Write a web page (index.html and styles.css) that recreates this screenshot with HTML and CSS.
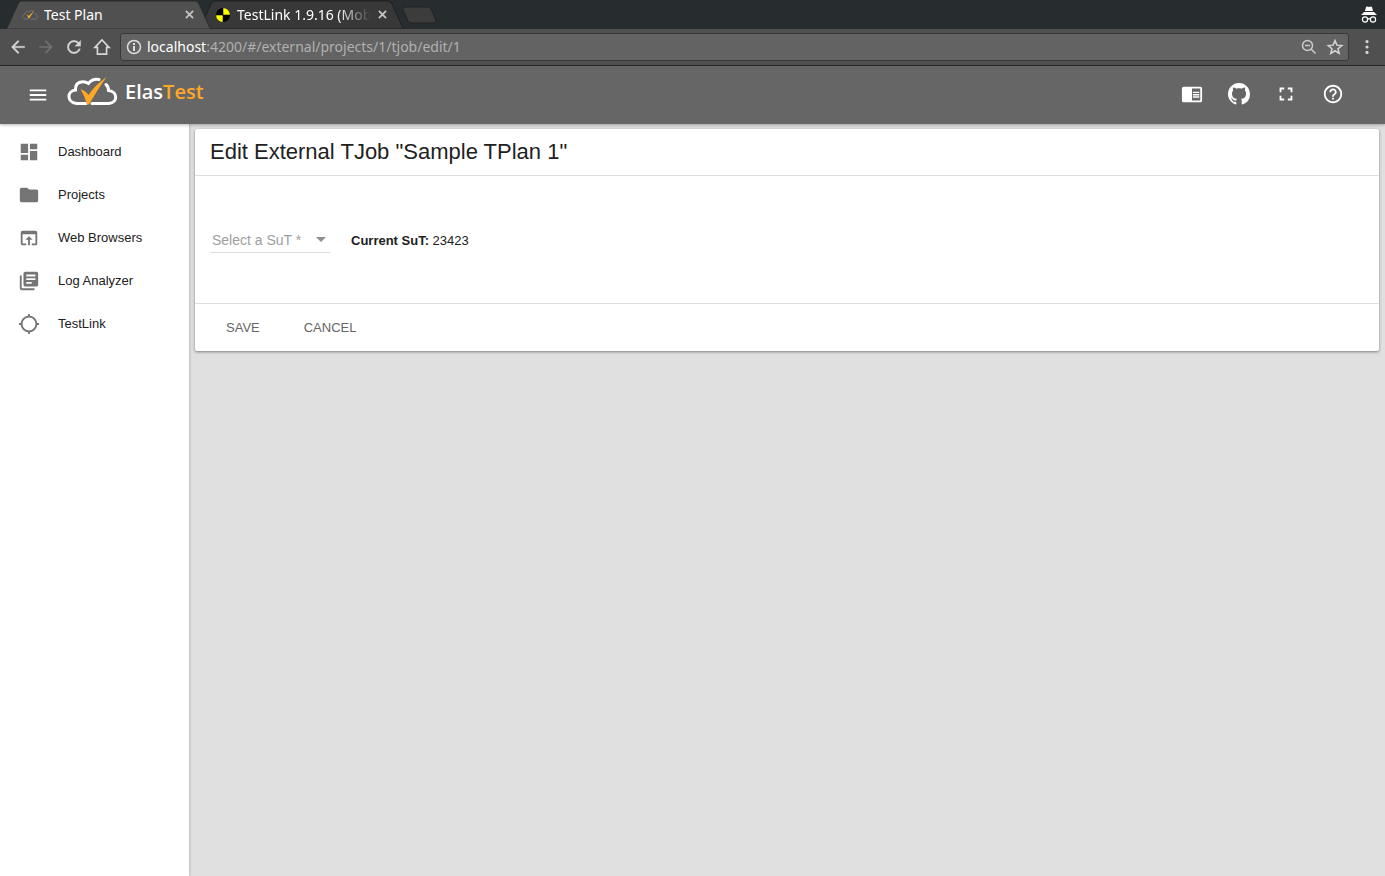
FILE: index.html
```html
<!DOCTYPE html>
<html lang="en">
<head>
<meta charset="utf-8">
<title>Test Plan</title>
<link rel="stylesheet" href="styles.css">
</head>
<body>
<div class="browser">
  <div class="tabstrip">
    <div class="tab tab-active">
      <svg class="tab-shape" viewBox="0 0 205 29" preserveAspectRatio="none" aria-hidden="true"><path d="M0 29Q1 28 2 26L12 4Q13 1 16 1H189Q192 1 193 4L203 26Q204 28 205 29Z" fill="#505050" stroke="#2c2c2c"/></svg>
      <svg class="favicon" viewBox="0 0 52 30" aria-hidden="true"><path d="M20 28H10C0 27-1 15 9 13C9 4 19 2 23 6C27 0 35 0 38 3M42 9L44 13C54 15 52 28 43 28H28" fill="none" stroke="#777" stroke-width="3"/><path d="M15 12L22 18L40 0L22 28Z" fill="#ffa726"/></svg>
      <span class="tab-title">Test Plan</span>
      <button class="tab-close" aria-label="Close Test Plan"><svg viewBox="0 0 10 10"><path d="M1 1L9 9M9 1L1 9"/></svg></button>
    </div>
    <div class="tab">
      <svg class="tab-shape" viewBox="0 0 205 29" preserveAspectRatio="none" aria-hidden="true"><path d="M0 29Q1 28 2 26L12 4Q13 1 16 1H189Q192 1 193 4L203 26Q204 28 205 29Z" fill="#383838" stroke="#1d1f20"/></svg>
      <svg class="favicon" viewBox="0 0 16 16" aria-hidden="true"><circle cx="8" cy="8" r="7" fill="#000"/><path d="M8 8V1A7 7 0 0 1 15 8ZM8 8V15A7 7 0 0 1 1 8Z" fill="#ff0"/><path d="M1 8H15M8 1V15" stroke="#000" stroke-width=".6"/></svg>
      <span class="tab-title tab-title-fade">TestLink 1.9.16 (Mob</span>
      <button class="tab-close" aria-label="Close TestLink"><svg viewBox="0 0 10 10"><path d="M1 1L9 9M9 1L1 9"/></svg></button>
    </div>
    <button class="new-tab" aria-label="New tab"><svg viewBox="0 0 36 18"><path d="M4 1H27Q29 1 30 3L35 14Q35 17 33 17H11Q8 17 7 15L2 4Q1 1 4 1Z" fill="#3c3c3c" stroke="#202223"/></svg></button>
    <svg class="incognito" viewBox="0 0 18 18" aria-hidden="true"><path d="M5 5L6 1Q7 0 9 1Q11 0 12 1L13 5ZM4 6H14L17 9H1Z" fill="#fff"/><g fill="none" stroke="#fff" stroke-width="1.2"><circle cx="5" cy="13.500" r="2.600"/><circle cx="13" cy="13.500" r="2.600"/><path d="M7.600 13.200Q9 12.200 10.400 13.200"/></g></svg>
  </div>
  <div class="toolbar">
    <button class="tool" aria-label="Back"><svg viewBox="0 0 24 24"><path d="M20 11H7.800l5.600-5.600L12 4l-8 8 8 8 1.400-1.400L7.800 13H20z" stroke="#d6d6d6" stroke-width=".3"/></svg></button>
    <button class="tool tool-off" aria-label="Forward" disabled><svg viewBox="0 0 24 24"><path d="M12 4l-1.400 1.400 5.600 5.600H4v2h12.200l-5.600 5.600L12 20l8-8z"/></svg></button>
    <button class="tool" aria-label="Reload"><svg viewBox="0 0 24 24"><path d="M17.650 6.350C16.200 4.900 14.210 4 12 4c-4.420 0-7.990 3.580-7.990 8s3.570 8 7.990 8c3.730 0 6.840-2.550 7.730-6h-2.080c-.82 2.330-3.040 4-5.650 4-3.310 0-6-2.690-6-6s2.690-6 6-6c1.660 0 3.140.69 4.220 1.780L13 11h7V4z" stroke="#d6d6d6" stroke-width=".3"/></svg></button>
    <button class="tool" aria-label="Home"><svg viewBox="0 0 24 24"><path d="M12 3.500L3.500 12.500H6.500V20.500H17.500V12.500H20.500Z" fill="none" stroke="#d6d6d6" stroke-width="2"/></svg></button>
    <div class="omnibox">
      <svg class="info" viewBox="0 0 16 16" aria-hidden="true"><circle cx="8" cy="8" r="6.500" fill="none" stroke="#ddd" stroke-width="1.500"/><path d="M7 7H9V12H7ZM7 4H9V6H7Z" fill="#ddd"/></svg>
      <span class="url"><span class="host">localhost</span>:4200/#/external/projects/1/tjob/edit/1</span>
      <svg class="box-icon" viewBox="0 0 18 18" aria-hidden="true"><g fill="none" stroke="#ccc" stroke-width="1.500"><circle cx="7.500" cy="7.500" r="5"/><path d="M5 7.500H10M11 11L15.500 15.500"/></g></svg>
      <svg class="box-icon" viewBox="0 0 24 24" aria-hidden="true"><path d="M12 3.500l2.500 6 6.500.5-5 4.200 1.600 6.300L12 17l-5.600 3.500L8 14.200 3 10l6.500-.5z" fill="none" stroke="#d6d6d6" stroke-width="2"/></svg>
    </div>
    <button class="tool" aria-label="Browser menu"><svg viewBox="0 0 24 24"><circle cx="12" cy="5.500" r="1.900"/><circle cx="12" cy="12" r="1.900"/><circle cx="12" cy="18.500" r="1.900"/></svg></button>
  </div>
</div>

<header class="app-header">
  <button class="icon-btn menu-btn" aria-label="Toggle menu"><svg viewBox="0 0 24 24"><path d="M3 18h18v-2H3v2zm0-5h18v-2H3v2zm0-7v2h18V6H3z"/></svg></button>
  <a class="brand" href="#" aria-label="ElasTest">
    <svg class="brand-logo" viewBox="0 0 52 30" aria-hidden="true"><path d="M20 26.500H11C.5 25.500.5 14 9.500 13C9 4.500 17.500 3 22.500 6.500C25 3 29 1.800 33 2.500M40 7.500Q42.500 9.500 42.500 13.500C52 14.500 52 25.500 43 26.500H26" fill="none" stroke="#fff" stroke-width="3" stroke-linecap="round"/><path d="M14.500 12Q20 14 22.500 18Q29 8 40.500 0Q32 12 23 27.500H21Q19 20 14.500 12Z" fill="#ffa726"/></svg>
    <span class="brand-name">Elas<span class="brand-accent">Test</span></span>
  </a>
  <div class="header-actions">
    <button class="icon-btn" aria-label="Documentation"><svg viewBox="0 0 24 24"><path d="M13 12h7v1.500h-7zm0-2.500h7V11h-7zm0 5h7V16h-7zM21 4H3c-1.100 0-2 .9-2 2v13c0 1.100.9 2 2 2h18c1.100 0 2-.9 2-2V6c0-1.100-.9-2-2-2zm0 15h-9V6h9v13z"/></svg></button>
    <button class="icon-btn" aria-label="GitHub"><svg viewBox="0 0 16 16"><path d="M8 0C3.580 0 0 3.580 0 8c0 3.540 2.290 6.530 5.470 7.590.4.070.55-.17.55-.38 0-.19-.01-.82-.01-1.490-2.010.37-2.530-.49-2.690-.94-.09-.23-.48-.94-.82-1.130-.28-.15-.68-.52-.01-.53.63-.01 1.080.58 1.230.82.72 1.210 1.870.87 2.330.66.070-.52.28-.87.51-1.070-1.780-.2-3.640-.89-3.640-3.950 0-.87.31-1.590.82-2.150-.08-.2-.36-1.020.08-2.120 0 0 .67-.21 2.200.82.64-.18 1.320-.27 2-.27s1.360.09 2 .27c1.530-1.040 2.200-.82 2.200-.82.44 1.100.16 1.920.08 2.120.51.56.82 1.270.82 2.150 0 3.070-1.870 3.750-3.650 3.950.29.25.54.73.54 1.480 0 1.070-.01 1.930-.01 2.200 0 .21.15.46.55.38A8.010 8.010 0 0 0 16 8c0-4.420-3.580-8-8-8z"/></svg></button>
    <button class="icon-btn" aria-label="Full screen"><svg viewBox="0 0 24 24"><path d="M7 14H5v5h5v-2H7v-3zm-2-4h2V7h3V5H5v5zm12 7h-3v2h5v-5h-2v3zM14 5v2h3v3h2V5h-5z"/></svg></button>
    <button class="icon-btn" aria-label="Help"><svg viewBox="0 0 24 24"><path d="M11 18h2v-2h-2v2zm1-16C6.480 2 2 6.480 2 12s4.480 10 10 10 10-4.480 10-10S17.520 2 12 2zm0 18c-4.410 0-8-3.590-8-8s3.590-8 8-8 8 3.590 8 8-3.590 8-8 8zm0-14c-2.210 0-4 1.790-4 4h2c0-1.100.9-2 2-2s2 .9 2 2c0 2-3 1.750-3 5h2c0-2.250 3-2.500 3-5 0-2.210-1.790-4-4-4z"/></svg></button>
  </div>
</header>

<div class="layout">
  <nav class="sidebar">
    <a class="nav-item" href="#"><svg viewBox="0 0 24 24"><path d="M3 13h8V3H3v10zm0 8h8v-6H3v6zm10 0h8V11h-8v10zm0-18v6h8V3h-8z"/></svg><span>Dashboard</span></a>
    <a class="nav-item" href="#"><svg viewBox="0 0 24 24"><path d="M10 4H4c-1.100 0-1.990.9-1.990 2L2 18c0 1.100.9 2 2 2h16c1.100 0 2-.9 2-2V8c0-1.100-.9-2-2-2h-8l-2-2z"/></svg><span>Projects</span></a>
    <a class="nav-item" href="#"><svg viewBox="0 0 24 24"><path d="M19 4H5c-1.110 0-2 .9-2 2v12c0 1.100.89 2 2 2h4v-2H5V8h14v10h-4v2h4c1.100 0 2-.9 2-2V6c0-1.100-.89-2-2-2zm-7 6l-4 4h3v6h2v-6h3l-4-4z"/></svg><span>Web Browsers</span></a>
    <a class="nav-item" href="#"><svg viewBox="0 0 24 24"><path d="M4 6H2v14c0 1.100.9 2 2 2h14v-2H4V6zm16-4H8c-1.100 0-2 .9-2 2v12c0 1.100.9 2 2 2h12c1.100 0 2-.9 2-2V4c0-1.100-.9-2-2-2zm-1 9H9V9h10v2zm-4 4H9v-2h6v2zm4-8H9V5h10v2z"/></svg><span>Log Analyzer</span></a>
    <a class="nav-item" href="#"><svg viewBox="0 0 24 24"><path d="M20.940 11c-.46-4.170-3.770-7.480-7.940-7.940V1h-2v2.060C6.830 3.520 3.520 6.830 3.060 11H1v2h2.060c.46 4.170 3.770 7.480 7.940 7.940V23h2v-2.060c4.170-.46 7.480-3.770 7.940-7.940H23v-2h-2.060zM12 19c-3.870 0-7-3.130-7-7s3.130-7 7-7 7 3.130 7 7-3.130 7-7 7z"/></svg><span>TestLink</span></a>
  </nav>
  <main class="content">
    <form class="card">
      <h1 class="card-title">Edit External TJob "Sample TPlan 1"</h1>
      <div class="card-body">
        <div class="select-field">
          <select class="sut-select" aria-label="Select a SuT" required>
            <option value="">Select a SuT *</option>
          </select>
          <svg class="select-arrow" viewBox="0 0 10 5" aria-hidden="true"><path d="M0 0H10L5 5Z"/></svg>
        </div>
        <p class="current"><strong>Current SuT:</strong> 23423</p>
      </div>
      <div class="card-actions">
        <button class="text-btn" type="submit">SAVE</button>
        <button class="text-btn" type="button">CANCEL</button>
      </div>
    </form>
  </main>
</div>
</body>
</html>
```

FILE: styles.css
```css
* { box-sizing: border-box; }

body {
  margin: 0;
  min-height: 100vh;
  display: flex;
  flex-direction: column;
  font: 13px/20px "Liberation Sans", Arial, sans-serif;
  color: #212121;
  background: #e0e0e0;
}

button {
  padding: 0;
  border: 0;
  background: none;
  color: inherit;
  font: inherit;
  display: flex;
  align-items: center;
  justify-content: center;
}

svg { display: block; flex: none; }

/* Browser frame */
.browser {
  font-family: "Noto Sans", "Open Sans", sans-serif;
  font-size: 14px;
  color: #fff;
}

.tabstrip {
  display: flex;
  align-items: center;
  height: 29px;
  padding: 0 7px 0 6px;
  background: #272c2f;
}

.tab {
  position: relative;
  isolation: isolate;
  display: flex;
  align-items: center;
  width: 205px;
  height: 29px;
  padding: 0 17px 0 16px;
}

.tab + .tab { margin-left: -12px; }
.tab-active { z-index: 1; }

.tab-shape {
  position: absolute;
  inset: 0;
  z-index: -1;
  width: 100%;
  height: 100%;
}

.favicon { width: 16px; height: 16px; }

.tab-title {
  flex: 1;
  min-width: 0;
  margin: 0 6px;
  overflow: hidden;
  white-space: nowrap;
}

.tab-title-fade {
  -webkit-mask-image: linear-gradient(90deg, #000 75%, transparent);
  mask-image: linear-gradient(90deg, #000 75%, transparent);
}

.tab-close { width: 10px; }
.tab-close svg { width: 9px; height: 9px; stroke: #c4c4c4; stroke-width: 2; }
.new-tab { margin-left: -3px; }
.new-tab svg { width: 36px; height: 18px; }
.incognito { width: 18px; height: 18px; margin-left: auto; }

.toolbar {
  display: flex;
  align-items: center;
  gap: 8px;
  height: 37px;
  padding: 0 8px;
  background: #505050;
  border-bottom: 1px solid #2b2b2b;
}

.tool { width: 20px; height: 20px; }
.tool svg { width: 20px; height: 20px; fill: #d6d6d6; }
.tool-off svg { fill: #727272; }

.omnibox {
  flex: 1;
  display: flex;
  align-items: center;
  gap: 8px;
  height: 28px;
  padding: 0 4px 0 5px;
  border: 1px solid #393939;
  border-radius: 3px;
  background: #636363;
}

.info { width: 16px; height: 16px; }
.url { flex: 1; margin-left: -3px; color: #b0b0b0; }
.host { color: #fff; }
.box-icon { width: 18px; height: 18px; }

/* Application header */
.app-header {
  position: relative;
  z-index: 2;
  display: flex;
  align-items: center;
  height: 58px;
  padding: 0 29px 0 27px;
  background: #666;
  color: #fff;
  box-shadow: 0 1px 3px rgba(0, 0, 0, .3);
}

.icon-btn { width: 47px; height: 36px; }
.icon-btn svg { width: 22px; height: 22px; fill: currentColor; }
.menu-btn { width: 22px; }

.brand {
  display: flex;
  align-items: center;
  gap: 7px;
  margin-left: 17px;
  padding-bottom: 7px;
  color: #fff;
  text-decoration: none;
}

.brand-logo { width: 52px; height: 30px; }
.brand-name { font: 600 20px/24px "Open Sans", "Noto Sans", sans-serif; }
.brand-accent { color: #ffa726; }
.header-actions { display: flex; margin-left: auto; padding-bottom: 2px; }

/* Page */
.layout { flex: 1; display: flex; }

.sidebar {
  width: 189px;
  flex: none;
  padding-top: 6px;
  background: #fff;
  box-shadow: 0 0 3px rgba(0, 0, 0, .3);
}

.nav-item {
  display: flex;
  align-items: center;
  gap: 18px;
  height: 43px;
  padding-left: 18px;
  color: #212121;
  text-decoration: none;
}

.nav-item svg { width: 22px; height: 22px; fill: #757575; }

.content { flex: 1; min-width: 0; padding: 5px 6px; }

.card {
  border-radius: 2px;
  background: #fff;
  box-shadow: 0 1px 3px rgba(0, 0, 0, .45);
}

.card-title {
  margin: 0;
  padding: 11px 15px;
  border-bottom: 1px solid #dedede;
  font-size: 22px;
  line-height: 24px;
  font-weight: 400;
}

.card-body {
  display: flex;
  align-items: center;
  gap: 21px;
  padding: 50px 15px;
}

.select-field {
  position: relative;
  width: 120px;
  border-bottom: 1px solid #dedede;
}

.sut-select {
  display: block;
  width: 100%;
  height: 26px;
  padding: 2px 24px 0 2px;
  border: 0;
  appearance: none;
  background: none;
  color: #9e9e9e;
  font: 14px/20px "Liberation Sans", Arial, sans-serif;
}

.select-arrow {
  position: absolute;
  top: 11px;
  right: 4px;
  width: 10px;
  height: 5px;
  fill: #8f8f8f;
  pointer-events: none;
}

.current { margin: 0; padding-top: 2px; }

.card-actions {
  display: flex;
  gap: 14px;
  padding: 6px 16px;
  border-top: 1px solid #dedede;
}

.text-btn {
  height: 35px;
  padding: 0 15px;
  color: #666;
}
```
